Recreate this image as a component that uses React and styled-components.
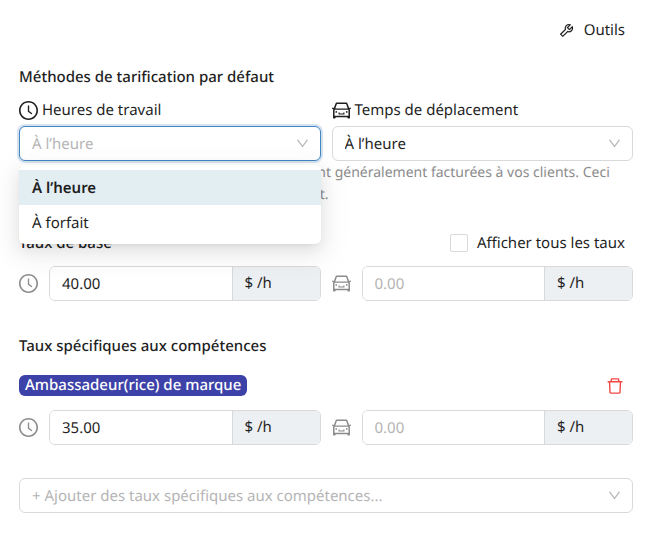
import React, { useState } from 'react';
import styled, { createGlobalStyle } from 'styled-components';
import {
  AiOutlineCar,
  AiOutlineClockCircle,
  AiOutlineDelete,
  AiOutlineDown,
  AiOutlineTool,
} from 'react-icons/ai';

const GlobalStyle = createGlobalStyle`
  * { box-sizing: border-box; }
  body {
    margin: 0;
    background: #fff;
    color: #1f1f1f;
    font-family: 'Noto Sans', 'Open Sans', sans-serif;
    font-size: 15px;
    line-height: 22px;
    text-rendering: geometricPrecision;
  }
  button, input, select { font: inherit; color: inherit; text-rendering: inherit; }
`;

const Page = styled.main`
  padding: 19px 15px 32px 19px;
`;
const TopBar = styled.div`
  display: flex;
  justify-content: flex-end;
  padding-right: 8px;
  margin-bottom: 25px;
`;
const ToolsButton = styled.button`
  display: flex; align-items: center; gap: 9px;
  padding: 0; border: none; background: none; cursor: pointer;
`;
const Title = styled.h2`
  margin: 0; font-size: 15px; font-weight: 500; line-height: 22px;
`;
const Columns = styled.div`
  display: grid;
  grid-template-columns: repeat(2, minmax(0, 1fr));
  column-gap: 11px;
`;
const Field = styled.div`
  position: relative;
  margin-top: 11px;
`;
const FieldLabel = styled.label`
  display: flex; align-items: center; gap: 4px;
  margin-bottom: 5px;
  svg { flex: none; }
`;
const SelectWrap = styled.div`
  position: relative;
  > svg {
    position: absolute; right: 11px; top: 10px;
    color: #b5b5b5; pointer-events: none;
  }
`;
const Select = styled.select`
  display: block;
  width: 100%;
  height: 35px;
  padding: 0 32px 0 12px;
  appearance: none;
  border: 1px solid ${(p) => (p.$open ? '#4385c0' : '#d9d9d9')};
  border-radius: 6px;
  background: #fff;
  color: ${(p) => (p.$muted ? '#b5b5b5' : '#1f1f1f')};
  box-shadow: ${(p) => (p.$open ? '0 0 0 2px #d5e3f1' : 'none')};
  outline: none;
  cursor: pointer;
`;
const Menu = styled.div`
  position: absolute; top: 100%; left: 0; right: 0; z-index: 5;
  margin-top: 4px;
  padding: 5px 0 4px;
  border-radius: 6px;
  background: #fff;
  box-shadow: 0 6px 16px rgba(0,0,0,0.08), 0 3px 6px -4px rgba(0,0,0,0.12), 0 9px 28px 8px rgba(0,0,0,0.05);
`;
const MenuItem = styled.button`
  display: block; width: 100%; height: 35px;
  padding: 0 13px; border: none; text-align: left; cursor: pointer;
  background: ${(p) => (p.$selected ? '#e3eef3' : '#fff')};
  font-weight: ${(p) => (p.$selected ? 600 : 400)};
`;
const Help = styled.p`
  margin: 1px 0 0; font-size: 14px; line-height: 22px; color: #8c8c8c;
`;
const SectionHead = styled.div`
  display: flex; align-items: center; justify-content: space-between;
  padding-right: 8px;
  margin: ${(p) => p.$top} 0 ${(p) => p.$bottom};
`;
const CheckLabel = styled.label`
  display: flex; align-items: center; gap: 9px; cursor: pointer;
`;
const Checkbox = styled.input`
  appearance: none;
  width: 18px; height: 18px; margin: 0;
  border: 1px solid #d9d9d9; border-radius: 2px; background: #fff;
  &:checked { background: #4385c0; border-color: #4385c0; }
`;
const Rate = styled.div`
  display: flex; align-items: center;
  > svg { flex: none; margin-right: 11px; color: #8c8c8c; }
`;
const RateBox = styled.label`
  display: flex; flex: 1; min-width: 0; height: 35px;
  border: 1px solid #d9d9d9; border-radius: 6px; overflow: hidden;
`;
const RateInput = styled.input`
  flex: 1; min-width: 0; padding: 0 12px;
  border: none; outline: none; background: #fff;
  &::placeholder { color: #b5b5b5; opacity: 1; }
`;
const Unit = styled.span`
  width: 88px; padding: 5px 12px;
  border-left: 1px solid #d9d9d9; background: #edf0f3;
`;
const Tag = styled.span`
  padding: 0 6px; border-radius: 6px;
  background: #3d42a8; color: #fff; font-weight: 500; line-height: 21px;
`;
const DeleteButton = styled.button`
  display: flex; padding: 0; border: none; background: none; color: #f04a43; cursor: pointer;
`;
const AddSkill = styled.div`
  margin-top: 33px;
`;

const METHODS = ['À l’heure', 'À forfait'];

// drops the blank margin that the icons have in their own box
const TIGHT = '64 64 896 896';

function RateField({ icon: Icon, label, value }) {
  return (
    <Rate>
      <Icon size={19} viewBox={TIGHT} />
      <RateBox>
        <RateInput type="text" inputMode="decimal" aria-label={label} defaultValue={value} placeholder="0.00" />
        <Unit>$ /h</Unit>
      </RateBox>
    </Rate>
  );
}

export default function PricingSettings() {
  const [work, setWork] = useState(METHODS[0]);
  const [travel, setTravel] = useState(METHODS[0]);
  const [open, setOpen] = useState(true);
  const [showAll, setShowAll] = useState(false);

  const toggleMenu = (e) => {
    e.preventDefault();
    setOpen((v) => !v);
  };

  return (
    <Page>
      <GlobalStyle />
      <TopBar>
        <ToolsButton type="button">
          <AiOutlineTool size={17} />
          Outils
        </ToolsButton>
      </TopBar>

      <Title>Méthodes de tarification par défaut</Title>
      <Columns>
        <Field>
          <FieldLabel htmlFor="work"><AiOutlineClockCircle size={19} viewBox={TIGHT} />Heures de travail</FieldLabel>
          <SelectWrap>
            <Select id="work" value={work} onChange={(e) => setWork(e.target.value)} onMouseDown={toggleMenu} $open={open} $muted={open}>
              {METHODS.map((m) => <option key={m}>{m}</option>)}
            </Select>
            <AiOutlineDown size={15} />
          </SelectWrap>
          {open && (
            <Menu role="listbox" aria-label="Heures de travail">
              {METHODS.map((m) => (
                <MenuItem
                  key={m}
                  type="button"
                  role="option"
                  aria-selected={m === work}
                  $selected={m === work}
                  onClick={() => { setWork(m); setOpen(false); }}
                >
                  {m}
                </MenuItem>
              ))}
            </Menu>
          )}
        </Field>
        <Field>
          <FieldLabel htmlFor="travel"><AiOutlineCar size={19} viewBox={TIGHT} />Temps de déplacement</FieldLabel>
          <SelectWrap>
            <Select id="travel" value={travel} onChange={(e) => setTravel(e.target.value)}>
              {METHODS.map((m) => <option key={m}>{m}</option>)}
            </Select>
            <AiOutlineDown size={15} />
          </SelectWrap>
        </Field>
      </Columns>
      <Help>
        Définit comment les heures et leurs trajets sont généralement facturées à vos clients. Ceci
        peut être modifié si besoin dans chaque projet.
      </Help>

      <SectionHead $top="26px" $bottom="12px">
        <Title>Taux de base</Title>
        <CheckLabel>
          <Checkbox type="checkbox" checked={showAll} onChange={(e) => setShowAll(e.target.checked)} />
          Afficher tous les taux
        </CheckLabel>
      </SectionHead>
      <Columns>
        <RateField icon={AiOutlineClockCircle} label="Taux de base, travail" value="40.00" />
        <RateField icon={AiOutlineCar} label="Taux de base, déplacement" />
      </Columns>

      <SectionHead $top="34px" $bottom="18px">
        <Title>Taux spécifiques aux compétences</Title>
      </SectionHead>
      <SectionHead $top="0" $bottom="14px">
        <Tag>Ambassadeur(rice) de marque</Tag>
        <DeleteButton type="button" aria-label="Supprimer"><AiOutlineDelete size={20} /></DeleteButton>
      </SectionHead>
      <Columns>
        <RateField icon={AiOutlineClockCircle} label="Taux de la compétence, travail" value="35.00" />
        <RateField icon={AiOutlineCar} label="Taux de la compétence, déplacement" />
      </Columns>

      <AddSkill>
        <SelectWrap>
          <Select aria-label="Ajouter des taux" defaultValue="" $muted>
            <option value="">+ Ajouter des taux spécifiques aux compétences...</option>
          </Select>
          <AiOutlineDown size={15} />
        </SelectWrap>
      </AddSkill>
    </Page>
  );
}
